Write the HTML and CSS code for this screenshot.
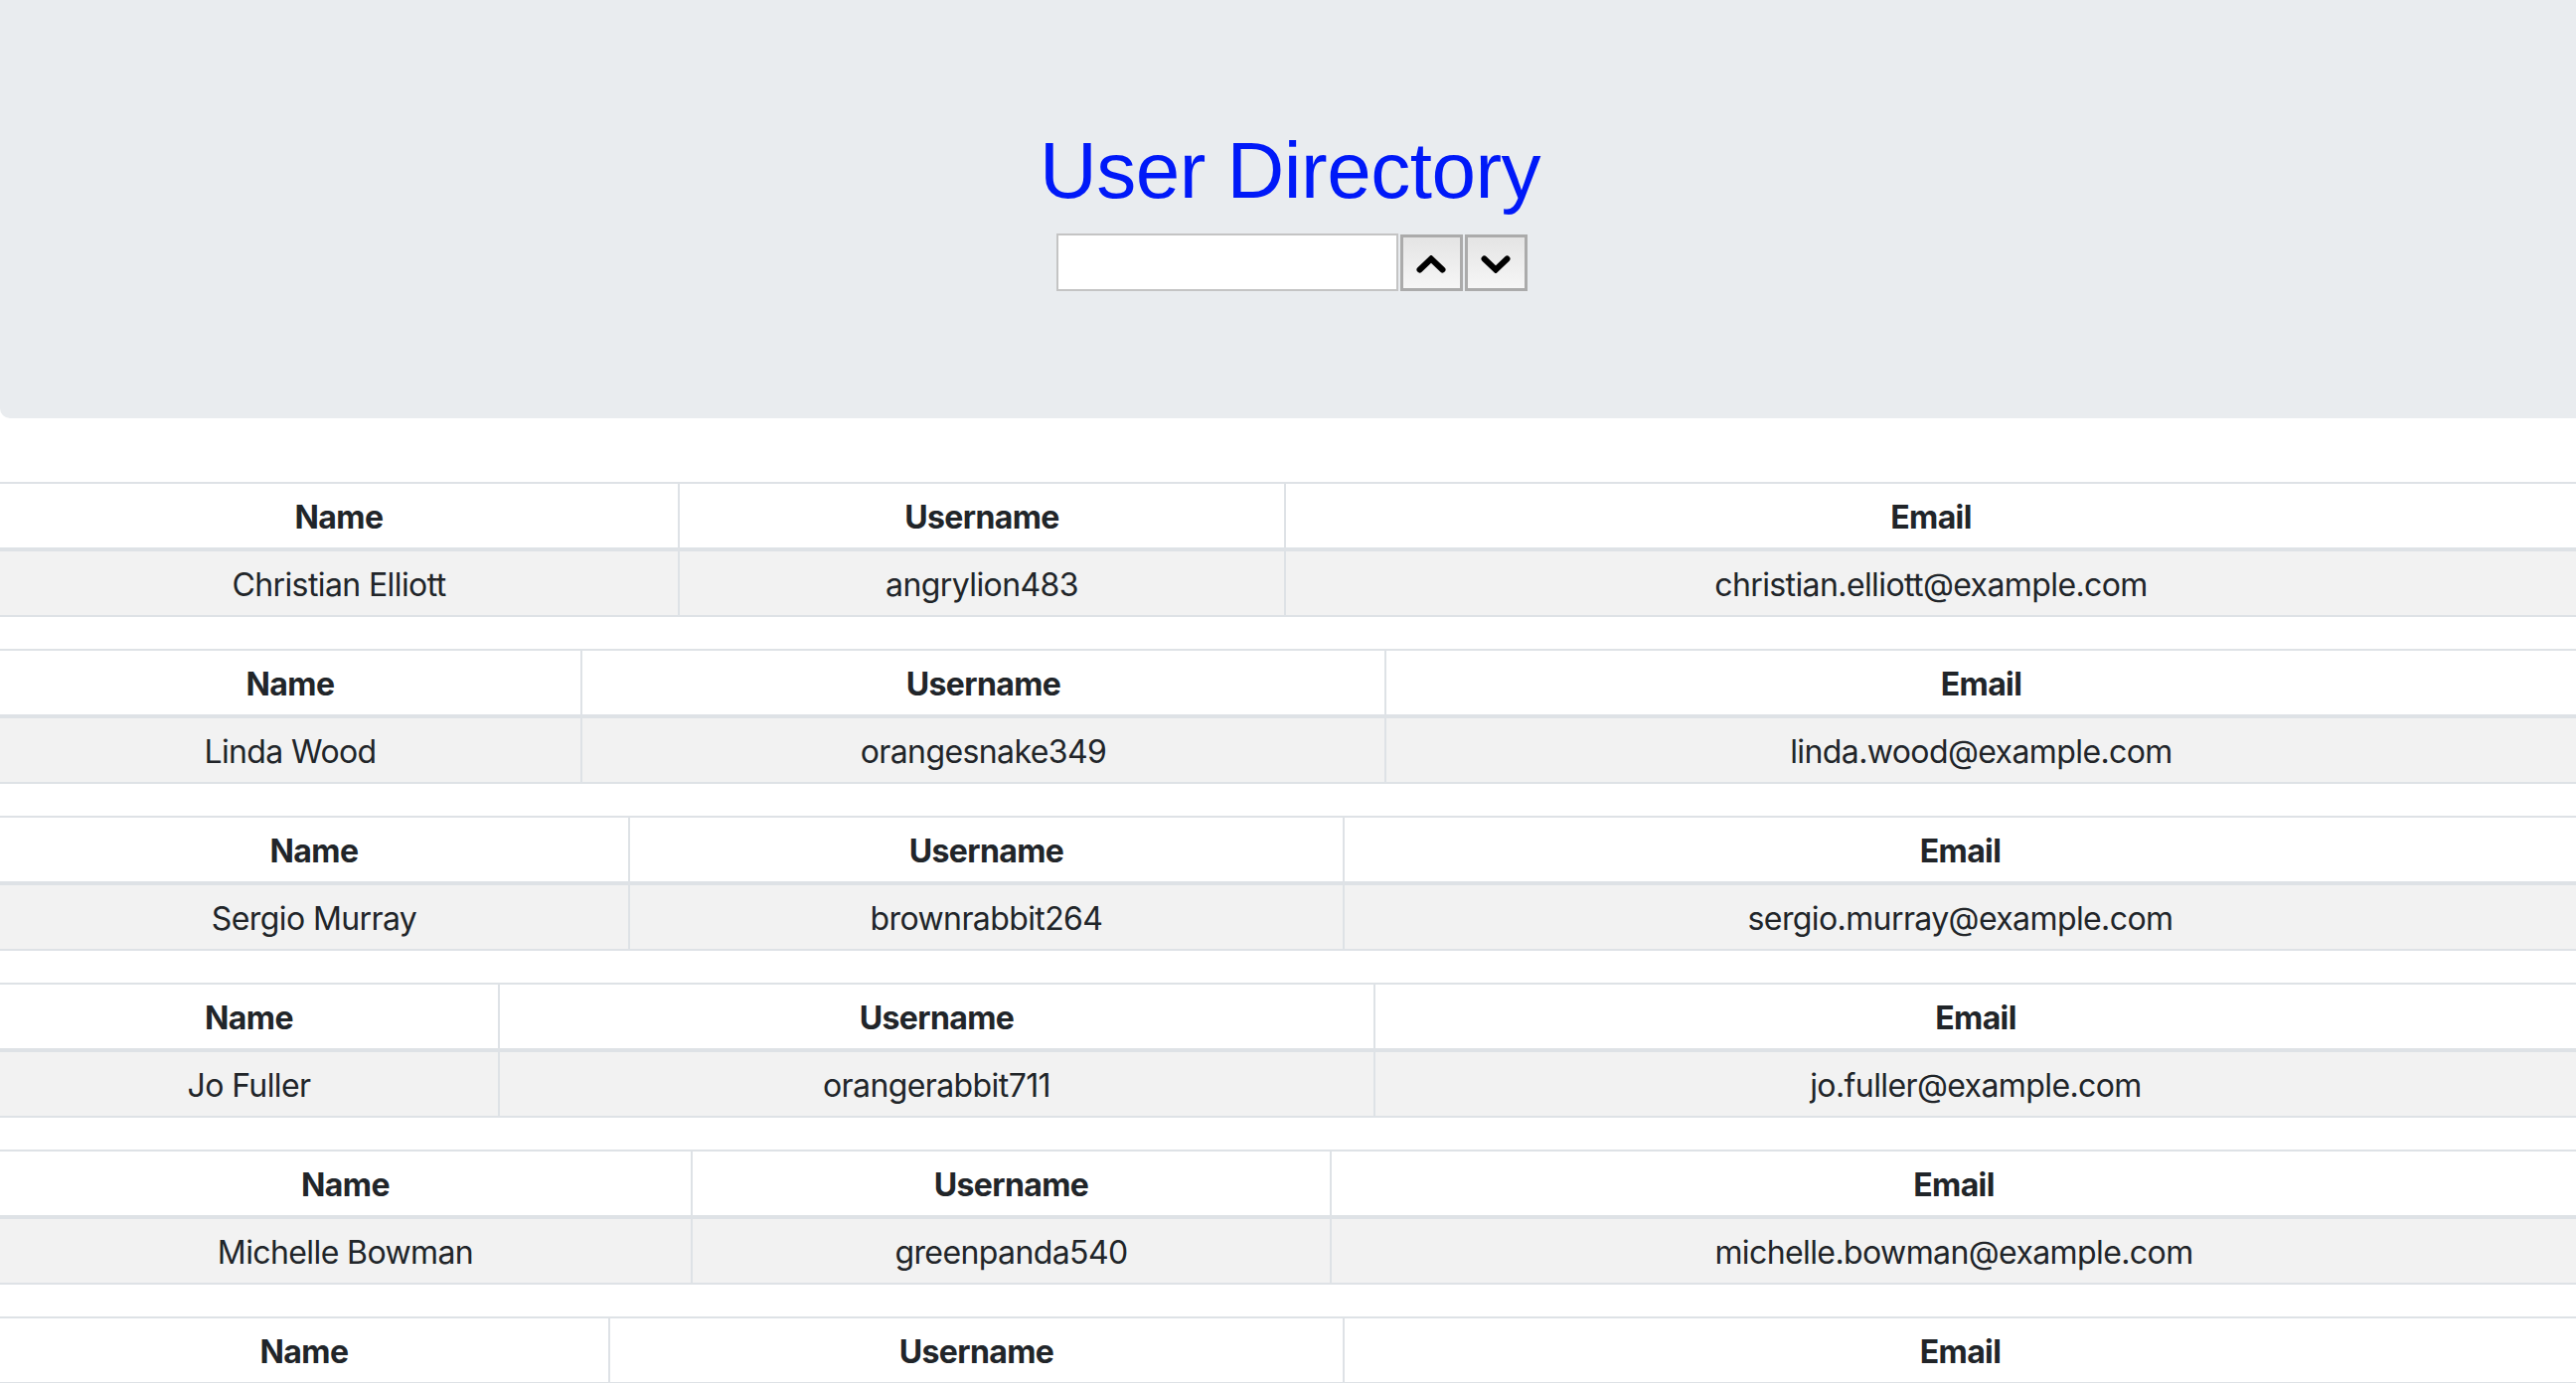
FILE: index.html
```html
<!DOCTYPE html>
<html lang="en">
<head>
<meta charset="utf-8">
<title>User Directory</title>
<link rel="stylesheet" href="styles.css">
</head>
<body>
<header class="jumbotron">
  <h1 class="title">User Directory</h1>
  <div class="search">
    <input class="search-input" type="text" aria-label="Search">
    <button class="step-btn" type="button" aria-label="Up">
      <svg viewBox="0 0 30 18" width="30" height="18"><polyline points="3.5,14.5 15,3.5 26.5,14.5" fill="none" stroke="#000" stroke-width="6" stroke-linecap="round" stroke-linejoin="miter"/></svg>
    </button>
    <button class="step-btn" type="button" aria-label="Down">
      <svg viewBox="0 0 30 18" width="30" height="18"><polyline points="3.5,3.5 15,14.5 26.5,3.5" fill="none" stroke="#000" stroke-width="6" stroke-linecap="round" stroke-linejoin="miter"/></svg>
    </button>
  </div>
</header>

<main class="list">
  <table class="user t1">
    <colgroup><col class="c1"><col class="c2"><col></colgroup>
    <thead><tr><th>Name</th><th>Username</th><th>Email</th></tr></thead>
    <tbody><tr><td>Christian Elliott</td><td>angrylion483</td><td>christian.elliott@example.com</td></tr></tbody>
  </table>
  <table class="user t2">
    <colgroup><col class="c1"><col class="c2"><col></colgroup>
    <thead><tr><th>Name</th><th>Username</th><th>Email</th></tr></thead>
    <tbody><tr><td>Linda Wood</td><td>orangesnake349</td><td>linda.wood@example.com</td></tr></tbody>
  </table>
  <table class="user t3">
    <colgroup><col class="c1"><col class="c2"><col></colgroup>
    <thead><tr><th>Name</th><th>Username</th><th>Email</th></tr></thead>
    <tbody><tr><td>Sergio Murray</td><td>brownrabbit264</td><td>sergio.murray@example.com</td></tr></tbody>
  </table>
  <table class="user t4">
    <colgroup><col class="c1"><col class="c2"><col></colgroup>
    <thead><tr><th>Name</th><th>Username</th><th>Email</th></tr></thead>
    <tbody><tr><td>Jo Fuller</td><td>orangerabbit711</td><td>jo.fuller@example.com</td></tr></tbody>
  </table>
  <table class="user t5">
    <colgroup><col class="c1"><col class="c2"><col></colgroup>
    <thead><tr><th>Name</th><th>Username</th><th>Email</th></tr></thead>
    <tbody><tr><td>Michelle Bowman</td><td>greenpanda540</td><td>michelle.bowman@example.com</td></tr></tbody>
  </table>
  <table class="user t6">
    <colgroup><col class="c1"><col class="c2"><col></colgroup>
    <thead><tr><th>Name</th><th>Username</th><th>Email</th></tr></thead>
    <tbody><tr><td>Leah Jenkins</td><td>tinyostrich512</td><td>leah.jenkins@example.com</td></tr></tbody>
  </table>
</main>
</body>
</html>
```

FILE: styles.css
```css
html, body {
  margin: 0;
  padding: 0;
  background: #ffffff;
}

body {
  font-family: Inter, "Noto Sans", sans-serif;
  color: #212529;
  font-size: 32px;
  line-height: 48px;
}

.jumbotron {
  background: #e9ecef;
  padding: 124px 64px 128px;
  border-radius: 0 0 0 10px;
  margin: 0 0 64px;
  text-align: center;
}

.title {
  margin: 0 0 15px 4px;
  font-family: "Liberation Sans", Arial, sans-serif;
  font-weight: 400;
  font-size: 80px;
  line-height: 96px;
  color: #0019f8;
  letter-spacing: -0.5px;
}

.search {
  display: flex;
  justify-content: center;
  align-items: flex-start;
  gap: 2px;
  margin-left: 7px;
}

.search-input {
  box-sizing: border-box;
  width: 344px;
  height: 58px;
  margin: 0;
  border: 2px solid #c4c4c4;
  background: #ffffff;
  padding: 0 6px;
  font-size: 26px;
  outline: none;
}

.step-btn {
  box-sizing: border-box;
  width: 63px;
  height: 57px;
  margin: 1px 0 0;
  padding: 0;
  border: 3px solid #ababab;
  background: linear-gradient(#e4e4e4, #f6f6f6);
  display: flex;
  align-items: center;
  justify-content: center;
}

.step-btn svg {
  display: block;
  margin-top: 2px;
}

.list {
  display: flex;
  flex-direction: column;
  gap: 32px;
}

.user {
  width: 100%;
  table-layout: fixed;
  border-collapse: collapse;
  text-align: center;
  letter-spacing: -0.6px;
}

.user th,
.user td {
  border: 2px solid #dee2e6;
  padding: 10px 8px 6px;
  line-height: 48px;
  white-space: nowrap;
}

.user tr > :first-child { border-left: 0; }
.user tr > :last-child { border-right: 0; }

.user th {
  font-weight: 700;
  background: #ffffff;
  border-bottom: 4px solid #dee2e6;
}

.user td {
  background: #f2f2f2;
  font-weight: 400;
}

.t1 .c1 { width: 683px; }
.t1 .c2 { width: 610px; }
.t2 .c1 { width: 585px; }
.t2 .c2 { width: 809px; }
.t3 .c1 { width: 633px; }
.t3 .c2 { width: 719px; }
.t4 .c1 { width: 502px; }
.t4 .c2 { width: 881px; }
.t5 .c1 { width: 696px; }
.t5 .c2 { width: 643px; }
.t6 .c1 { width: 613px; }
.t6 .c2 { width: 739px; }
```
